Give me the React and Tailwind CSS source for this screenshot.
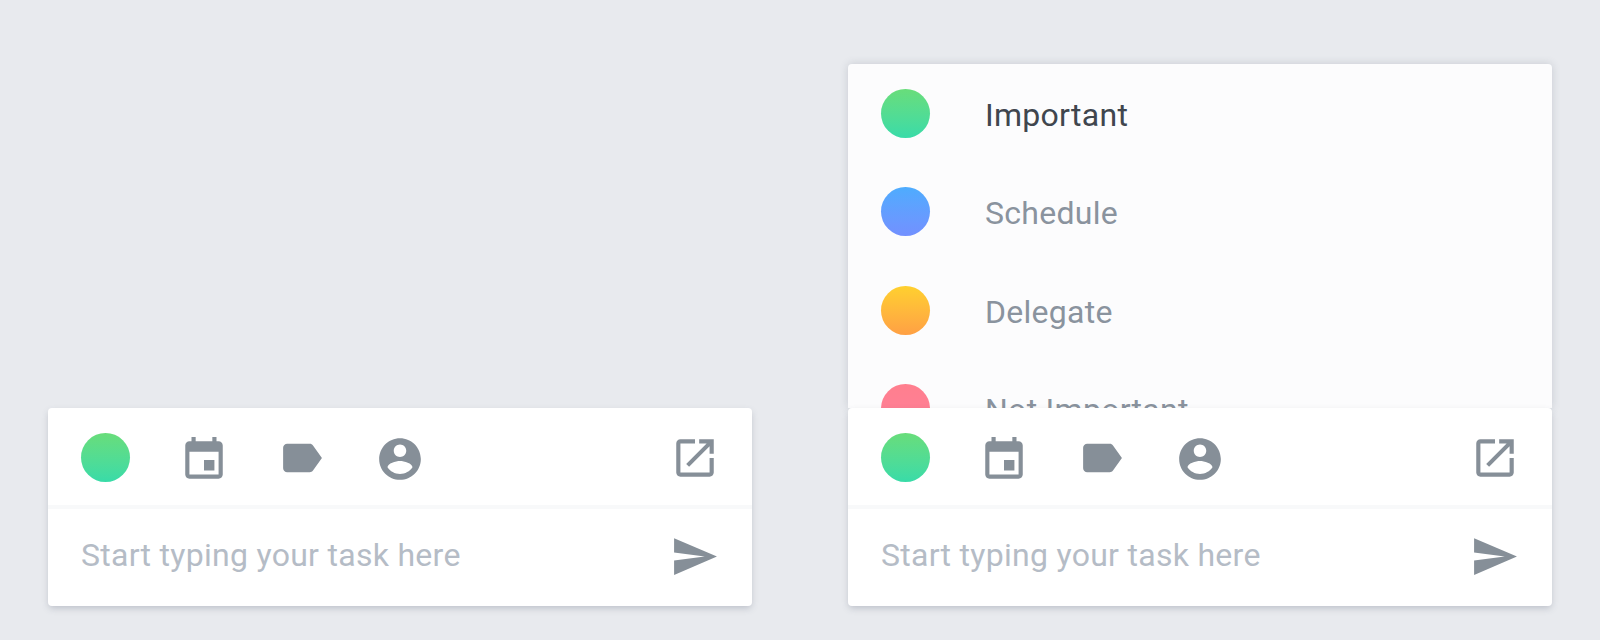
const ICON = "#868f98";
const P = {
  event: "M17 12h-5v5h5v-5zM16 1v2H8V1H6v2H5c-1.11 0-1.99.9-1.99 2L3 19c0 1.1.89 2 2 2h14c1.1 0 2-.9 2-2V5c0-1.1-.9-2-2-2h-1V1h-2zm3 18H5V8h14v11z",
  label: "M17.63 5.84C17.27 5.33 16.67 5 16 5L5 5.01C3.9 5.01 3 5.9 3 7v10c0 1.1.9 1.99 2 1.99L16 19c.67 0 1.27-.33 1.63-.84L22 12l-4.37-6.16z",
  account: "M12 2C6.48 2 2 6.48 2 12s4.48 10 10 10 10-4.48 10-10S17.52 2 12 2zm0 3c1.66 0 3 1.34 3 3s-1.34 3-3 3-3-1.34-3-3 1.34-3 3-3zm0 14.2c-2.5 0-4.71-1.28-6-3.22.03-1.99 4-3.08 6-3.08 1.99 0 5.97 1.09 6 3.08-1.29 1.94-3.5 3.22-6 3.22z",
  open: "M19 19H5V5h7V3H5c-1.11 0-2 .9-2 2v14c0 1.1.89 2 2 2h14c1.1 0 2-.9 2-2v-7h-2v7zM14 3v2h3.59l-9.83 9.83 1.41 1.41L19 6.41V10h2V3h-7z",
  send: "M2.01 21L23 12 2.01 3 2 10l15 2-15 2z",
};

function Icon({ d, className = "" }) {
  return (
    <svg viewBox="0 0 24 24" fill={ICON} className={`shrink-0 ${className}`}>
      <path d={d} />
    </svg>
  );
}

function Dot({ className }) {
  return <span className={`block h-[49px] w-[49px] shrink-0 rounded-full bg-gradient-to-b ${className}`} />;
}

function Composer() {
  return (
    <div className="relative z-10 h-[198px] w-[704px] rounded-[4px] bg-white shadow-[0_3px_7px_-1px_rgba(70,80,100,0.28)]">
      <div className="flex h-[101px] items-center border-b-[4px] border-[#f8f9fa] pl-[33px] pr-[32px] pt-[1px]">
        <Dot className="from-[#68dd7a] to-[#38dba8]" />
        <Icon d={P.event} className="ml-[49px] mt-[5px] h-[50px] w-[50px]" />
        <Icon d={P.label} className="ml-[48px] mt-[2px] h-[50px] w-[49px]" />
        <Icon d={P.account} className="ml-[49px] mt-[3px] h-[50px] w-[50px]" />
        <Icon d={P.open} className="ml-auto mt-[2px] h-[50px] w-[50px]" />
      </div>
      <div className="flex h-[97px] items-center pl-[33px] pr-[33px]">
        <span className="mb-[5px] text-[32px] leading-none tracking-[0.28px] text-[#b5bcc6]">
          Start typing your task here
        </span>
        <Icon d={P.send} className="mb-[2px] ml-auto h-[49px] w-[49px]" />
      </div>
    </div>
  );
}

const ITEMS = [
  ["Important", "from-[#68dd7a] to-[#38dba8]", "text-[#40464e]"],
  ["Schedule", "from-[#4dacfe] to-[#7290ff]", "text-[#8a939e]"],
  ["Delegate", "from-[#ffd02e] to-[#ffa044]", "text-[#8a939e]"],
  ["Not Important", "from-[#ff7f8e] to-[#ff7f9a]", "text-[#8a939e]"],
];

export default function App() {
  return (
    <div className="flex h-[640px] w-[1600px] items-end gap-[96px] bg-[#e8eaee] pb-[34px] pl-[48px] font-['Roboto',sans-serif]">
      <Composer />
      <div className="flex w-[704px] flex-col">
        <div className="h-[344px] overflow-hidden rounded-t-[4px] bg-[#fcfcfd] shadow-[0_0_8px_rgba(70,80,100,0.2)]">
          {ITEMS.map(([name, grad, color]) => (
            <div key={name} className="flex h-[98.5px] items-center pl-[33px]">
              <Dot className={grad} />
              <span className={`ml-[55px] mt-[3px] text-[32px] leading-none tracking-[0.28px] ${color}`}>{name}</span>
            </div>
          ))}
        </div>
        <Composer />
      </div>
    </div>
  );
}
